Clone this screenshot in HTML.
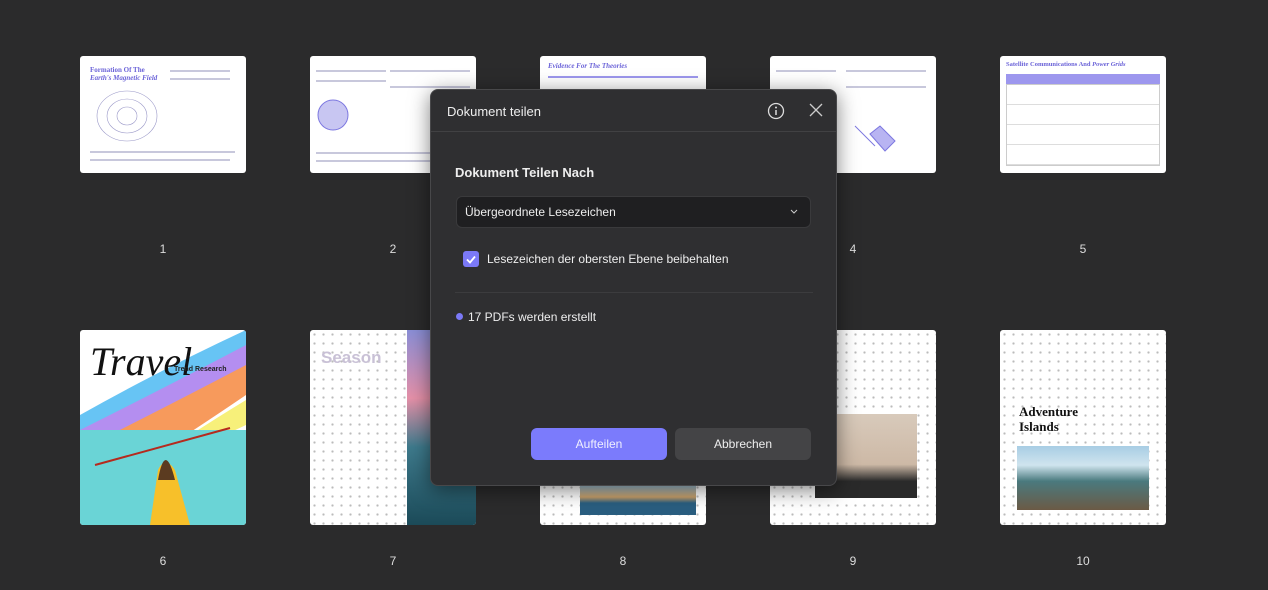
<!DOCTYPE html><html><head><meta charset="utf-8"><style>
body{margin:0;width:1268px;height:590px;background:#2b2b2c;font-family:"Liberation Sans",sans-serif;position:relative;overflow:hidden}
.t{position:absolute;width:166px;background:#fff;border-radius:3px;overflow:hidden}
.r1{top:56px;height:117px}.r2{top:330px;height:195px}
.n{position:absolute;color:#ddd;font-size:12px;width:166px;text-align:center}
.dots{background-color:#fff;background-image:radial-gradient(#bbb 1px,transparent 1.3px);background-size:9px 9px}
.ln{position:absolute;height:2px;background:#c8c8dc}
.dlg{position:absolute;left:430px;top:89px;width:405px;height:395px;background:#2f2f31;border:1px solid #48484a;border-radius:8px;color:#eee;box-shadow:0 4px 20px rgba(0,0,0,.5)}
</style></head><body>
<div class="t r1" style="left:80px"><div style="position:absolute;left:10px;top:10px;color:#6b63d8;font:bold 7px 'Liberation Serif',serif">Formation Of The<br><i>Earth's Magnetic Field</i></div><svg style="position:absolute;left:12px;top:30px" width="70" height="60"><g fill="none" stroke="#9a98c8" stroke-width=".6"><ellipse cx="35" cy="30" rx="30" ry="25"/><ellipse cx="35" cy="30" rx="20" ry="17"/><ellipse cx="35" cy="30" rx="10" ry="9"/></g></svg><div class="ln" style="left:90px;top:14px;width:60px"></div><div class="ln" style="left:90px;top:22px;width:60px"></div><div class="ln" style="left:10px;top:95px;width:145px"></div><div class="ln" style="left:10px;top:103px;width:140px"></div></div>
<div class="t r1" style="left:310px"><svg style="position:absolute;left:6px;top:42px" width="34" height="34"><circle cx="17" cy="17" r="15" fill="#c8c6f2" stroke="#7d78e0"/></svg><div class="ln" style="left:6px;top:14px;width:70px"></div><div class="ln" style="left:6px;top:24px;width:70px"></div><div class="ln" style="left:80px;top:14px;width:80px"></div><div class="ln" style="left:80px;top:30px;width:80px"></div><div class="ln" style="left:6px;top:96px;width:150px"></div><div class="ln" style="left:6px;top:104px;width:150px"></div></div>
<div class="t r1" style="left:540px"><div style="position:absolute;left:8px;top:6px;color:#6b63d8;font:italic bold 7px 'Liberation Serif',serif">Evidence For The Theories</div><div class="ln" style="left:8px;top:20px;width:150px;background:#9d97ee"></div></div>
<div class="t r1" style="left:770px"><div class="ln" style="left:6px;top:14px;width:60px"></div><div class="ln" style="left:76px;top:14px;width:80px"></div><div class="ln" style="left:76px;top:30px;width:80px"></div><svg style="position:absolute;left:80px;top:60px" width="50" height="45"><path d="M5 10 L25 30 M20 18 L35 35 L45 25 L30 10Z" stroke="#7d78e0" fill="#b8b4f2"/></svg></div>
<div class="t r1" style="left:1000px"><div style="position:absolute;left:6px;top:5px;color:#6b63d8;font:bold 6.5px 'Liberation Serif',serif">Satellite Communications And <i>Power Grids</i></div><div style="position:absolute;left:6px;top:18px;width:154px;height:10px;background:#9d97ee"></div><div style="position:absolute;left:6px;top:28px;width:152px;height:80px;border:1px solid #ccc;background:repeating-linear-gradient(#fff 0 19px,#ddd 19px 20px)"></div></div>
<div class="n" style="left:80px;top:242px">1</div><div class="n" style="left:310px;top:242px">2</div><div class="n" style="left:770px;top:242px">4</div><div class="n" style="left:1000px;top:242px">5</div>
<div class="t r2" style="left:80px"><svg width="166" height="195" style="position:absolute;left:0;top:0"><path d="M0 85 Q80 40 166 0 L166 30 Q100 80 0 135Z" fill="#67c4f4"/><path d="M0 100 Q90 55 166 15 L166 50 Q100 95 0 140Z" fill="#b48ef0"/><path d="M0 120 Q90 75 166 35 L166 65 Q100 110 20 160 L0 160Z" fill="#f79a5c"/><path d="M30 160 Q100 110 166 70 L166 95 Q110 120 60 160Z" fill="#f7f07a"/><rect y="100" width="166" height="95" fill="#6ad4d6"/><path d="M70 195 L78 140 Q85 125 95 140 L110 195Z" fill="#f7c02a"/><path d="M78 150 Q85 110 95 150Z" fill="#5b3b20"/><path d="M15 135 L150 98" stroke="#b52a1e" stroke-width="2"/></svg><div style="position:absolute;left:10px;top:8px;font:italic 40px 'Liberation Serif',serif;color:#111">Travel</div><div style="position:absolute;left:94px;top:36px;font:bold 7px 'Liberation Sans';color:#222">Trend Research</div></div>
<div class="t r2 dots" style="left:310px"><div style="position:absolute;left:11px;top:18px;font:bold 17px 'Liberation Sans';color:#c9c1d6">Season</div><div style="position:absolute;left:97px;top:0;width:69px;height:195px;background:linear-gradient(#8a8ed6,#e590a8 35%,#3e7a8c 60%,#1b4a58)"></div></div>
<div class="t r2 dots" style="left:540px"><div style="position:absolute;left:40px;top:155px;width:116px;height:30px;background:linear-gradient(#9dc0d6,#c9a06a 40%,#2a5e80 60%)"></div></div>
<div class="t r2 dots" style="left:770px"><div style="position:absolute;left:45px;top:84px;width:102px;height:84px;background:linear-gradient(#d8cabb,#cdb9a6 60%,#2a2a2a 80%)"></div></div>
<div class="t r2 dots" style="left:1000px"><div style="position:absolute;left:19px;top:74px;font:bold 13px 'Liberation Serif',serif;color:#111;line-height:15px">Adventure<br>Islands</div><div style="position:absolute;left:17px;top:116px;width:132px;height:64px;background:linear-gradient(#a8cde4,#cfe4ee 30%,#4a7a7e 55%,#6b5a45)"></div></div>
<div class="n" style="left:80px;top:554px">6</div><div class="n" style="left:310px;top:554px">7</div><div class="n" style="left:540px;top:554px">8</div><div class="n" style="left:770px;top:554px">9</div><div class="n" style="left:1000px;top:554px">10</div>
<div class="dlg">
<div style="position:absolute;left:16px;top:14px;font-size:13px">Dokument teilen</div>
<svg style="position:absolute;left:336px;top:12px" width="18" height="18"><circle cx="9" cy="9" r="7.5" fill="none" stroke="#ddd" stroke-width="1.3"/><path d="M9 8v5" stroke="#ddd" stroke-width="1.5"/><circle cx="9" cy="5.5" r="1" fill="#ddd"/></svg>
<svg style="position:absolute;left:378px;top:13px" width="14" height="14"><path d="M1 1L13 13M13 1L1 13" stroke="#ccc" stroke-width="1.3"/></svg>
<div style="position:absolute;left:0;top:41px;width:405px;height:1px;background:#414143"></div>
<div style="position:absolute;left:24px;top:75px;font-size:13px;font-weight:bold">Dokument Teilen Nach</div>
<div style="position:absolute;left:25px;top:106px;width:353px;height:30px;background:#1f1f21;border:1px solid #3a3a3c;border-radius:6px"><div style="position:absolute;left:8px;top:8px;font-size:12px">Übergeordnete Lesezeichen</div><svg style="position:absolute;right:12px;top:12px" width="8" height="6"><path d="M1 1l3 3 3-3" stroke="#ccc" fill="none"/></svg></div>
<div style="position:absolute;left:32px;top:161px;width:16px;height:16px;background:#7b79f7;border-radius:3px"><svg width="16" height="16"><path d="M4 8.5l3 3 5-6" stroke="#fff" stroke-width="1.8" fill="none"/></svg></div>
<div style="position:absolute;left:56px;top:162px;font-size:12px">Lesezeichen der obersten Ebene beibehalten</div>
<div style="position:absolute;left:24px;top:202px;width:358px;height:1px;background:#3c3c3e"></div>
<div style="position:absolute;left:25px;top:223px;width:7px;height:7px;border-radius:50%;background:#7b79f7"></div>
<div style="position:absolute;left:37px;top:220px;font-size:12px">17 PDFs werden erstellt</div>
<div style="position:absolute;left:100px;top:338px;width:136px;height:32px;background:#7b7bfc;border-radius:6px;text-align:center;line-height:32px;font-size:12px;color:#f0f0ff">Aufteilen</div>
<div style="position:absolute;left:244px;top:338px;width:136px;height:32px;background:#444446;border-radius:6px;text-align:center;line-height:32px;font-size:12px">Abbrechen</div>
</div>
</body></html>
